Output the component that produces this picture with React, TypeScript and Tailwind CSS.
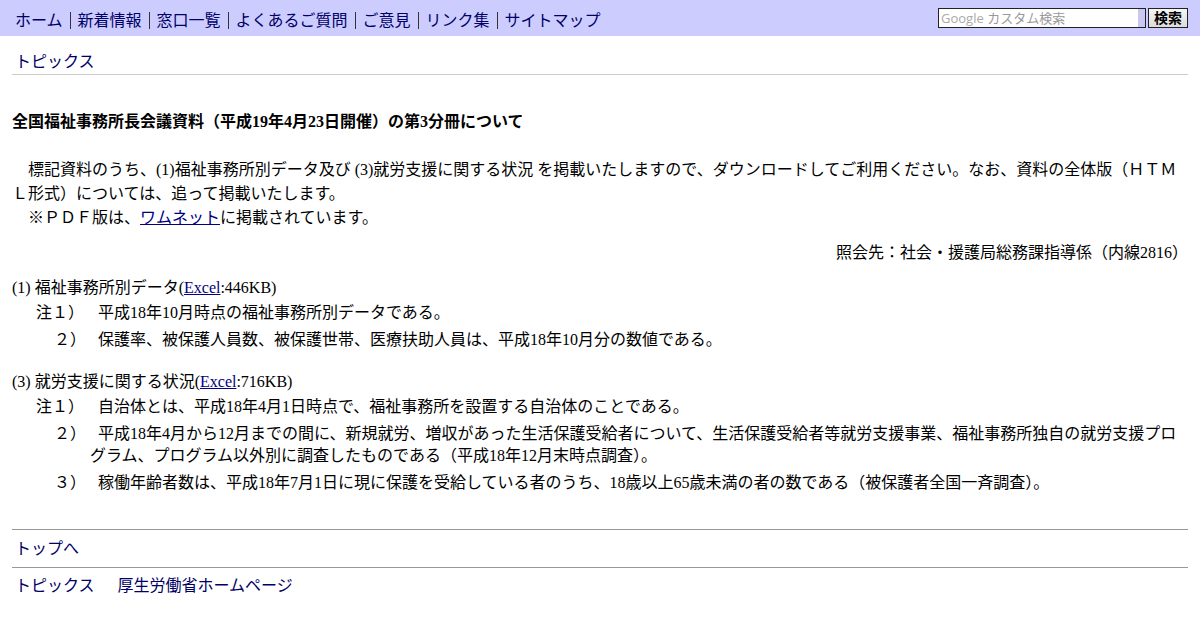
import React from "react";

const serif = { fontFamily: '"Liberation Serif", "Noto Sans CJK JP", serif' };
const sans = { fontFamily: '"Liberation Sans", "Noto Sans CJK JP", sans-serif' };

const navItems = ["ホーム", "新着情報", "窓口一覧", "よくあるご質問", "ご意見", "リンク集", "サイトマップ"];

function Note({ label, pad, first, children }: { label: string; pad: string; first?: boolean; children: React.ReactNode }) {
  return (
    <div className={`pl-[78px] -indent-[54px] leading-[22px] ${first ? "mt-[2px]" : "mt-[5px]"}`}>
      <span className={`inline-block indent-0 w-[62px] ${pad}`}>{label}</span>
      {children}
    </div>
  );
}

const SP = "\u3000";

export default function App() {
  return (
    <div className="w-[1200px] h-[630px] bg-white text-[16px] text-black" style={serif}>
      <div className="h-[36px] bg-[#ccccff] flex items-center justify-between pl-[8px] pr-[12px]" style={sans}>
        <div className="flex items-center text-[#000066] text-[16px]">
          {navItems.map((n, i) => (
            <span
              key={n}
              className={`px-[7px] leading-[17px] mt-[4px] ${i < navItems.length - 1 ? "border-r border-[#333]" : ""}`}
            >
              {n}
            </span>
          ))}
        </div>
        <div className="flex items-center gap-[2px]">
          <div className="w-[208px] h-[20px] border border-[#222] bg-white flex">
            <div className="flex-1 text-[13px] leading-[18px] pl-[2px] text-[#999]">
              <span className="text-[#aaa]" style={{ fontFamily: '"Open Sans", sans-serif' }}>Google</span> カスタム検索
            </div>
            <div className="w-[7px] bg-[#c8c8f4]"></div>
          </div>
          <div className="w-[40px] h-[20px] border border-[#222] bg-gradient-to-b from-[#f6f6f6] to-[#dcdcdc] text-[14px] font-bold leading-[18px] text-center text-black">
            検索
          </div>
        </div>
      </div>

      <div className="px-[12px]">
        <div className="pt-[15px] pb-[1px] border-b border-[#cccccc] pl-[3px] text-[#000066] leading-[22px]" style={sans}>
          トピックス
        </div>

        <div className="mt-[36px] font-bold leading-[22px]">
          全国福祉事務所長会議資料（平成19年4月23日開催）の第3分冊について
        </div>

        <div className="mt-[25px] leading-[24px]">
          <div>
            {SP}標記資料のうち、(1)福祉事務所別データ及び (3)就労支援に関する状況 を掲載いたしますので、ダウンロードしてご利用ください。なお、資料の全体版（ＨＴＭＬ形式）については、追って掲載いたします。
          </div>
          <div>
            {SP}※ＰＤＦ版は、<a className="text-[#000080] underline">ワムネット</a>に掲載されています。
          </div>
        </div>

        <div className="mt-[11px] text-right leading-[24px]">照会先：社会・援護局総務課指導係（内線2816）</div>

        <div className="mt-[11px] leading-[24px]">
          (1) 福祉事務所別データ(<a className="text-[#000080] underline">Excel</a>:446KB)
        </div>
        <Note label="注１）" pad="" first>平成18年10月時点の福祉事務所別データである。</Note>
        <Note label="２）" pad="pl-[18px]">保護率、被保護人員数、被保護世帯、医療扶助人員は、平成18年10月分の数値である。</Note>

        <div className="mt-[19px] leading-[24px]">
          (3) 就労支援に関する状況(<a className="text-[#000080] underline">Excel</a>:716KB)
        </div>
        <Note label="注１）" pad="" first>自治体とは、平成18年4月1日時点で、福祉事務所を設置する自治体のことである。</Note>
        <Note label="２）" pad="pl-[18px]">
          平成18年4月から12月までの間に、新規就労、増収があった生活保護受給者について、生活保護受給者等就労支援事業、福祉事務所独自の就労支援プログラム、プログラム以外別に調査したものである（平成18年12月末時点調査）。
        </Note>
        <Note label="３）" pad="pl-[18px]">稼働年齢者数は、平成18年7月1日に現に保護を受給している者のうち、18歳以上65歳未満の者の数である（被保護者全国一斉調査）。</Note>

        <div className="mt-[35px] border-t border-[#999999]"></div>
        <div className="pl-[3px] pt-[8px] pb-[7px] leading-[22px] text-[#000066]" style={sans}>トップへ</div>
        <div className="border-t border-[#999999]"></div>
        <div className="pl-[3px] pt-[7px] leading-[22px] text-[#000066] flex gap-[23px]" style={sans}>
          <span>トピックス</span>
          <span>厚生労働省ホームページ</span>
        </div>
      </div>
    </div>
  );
}
